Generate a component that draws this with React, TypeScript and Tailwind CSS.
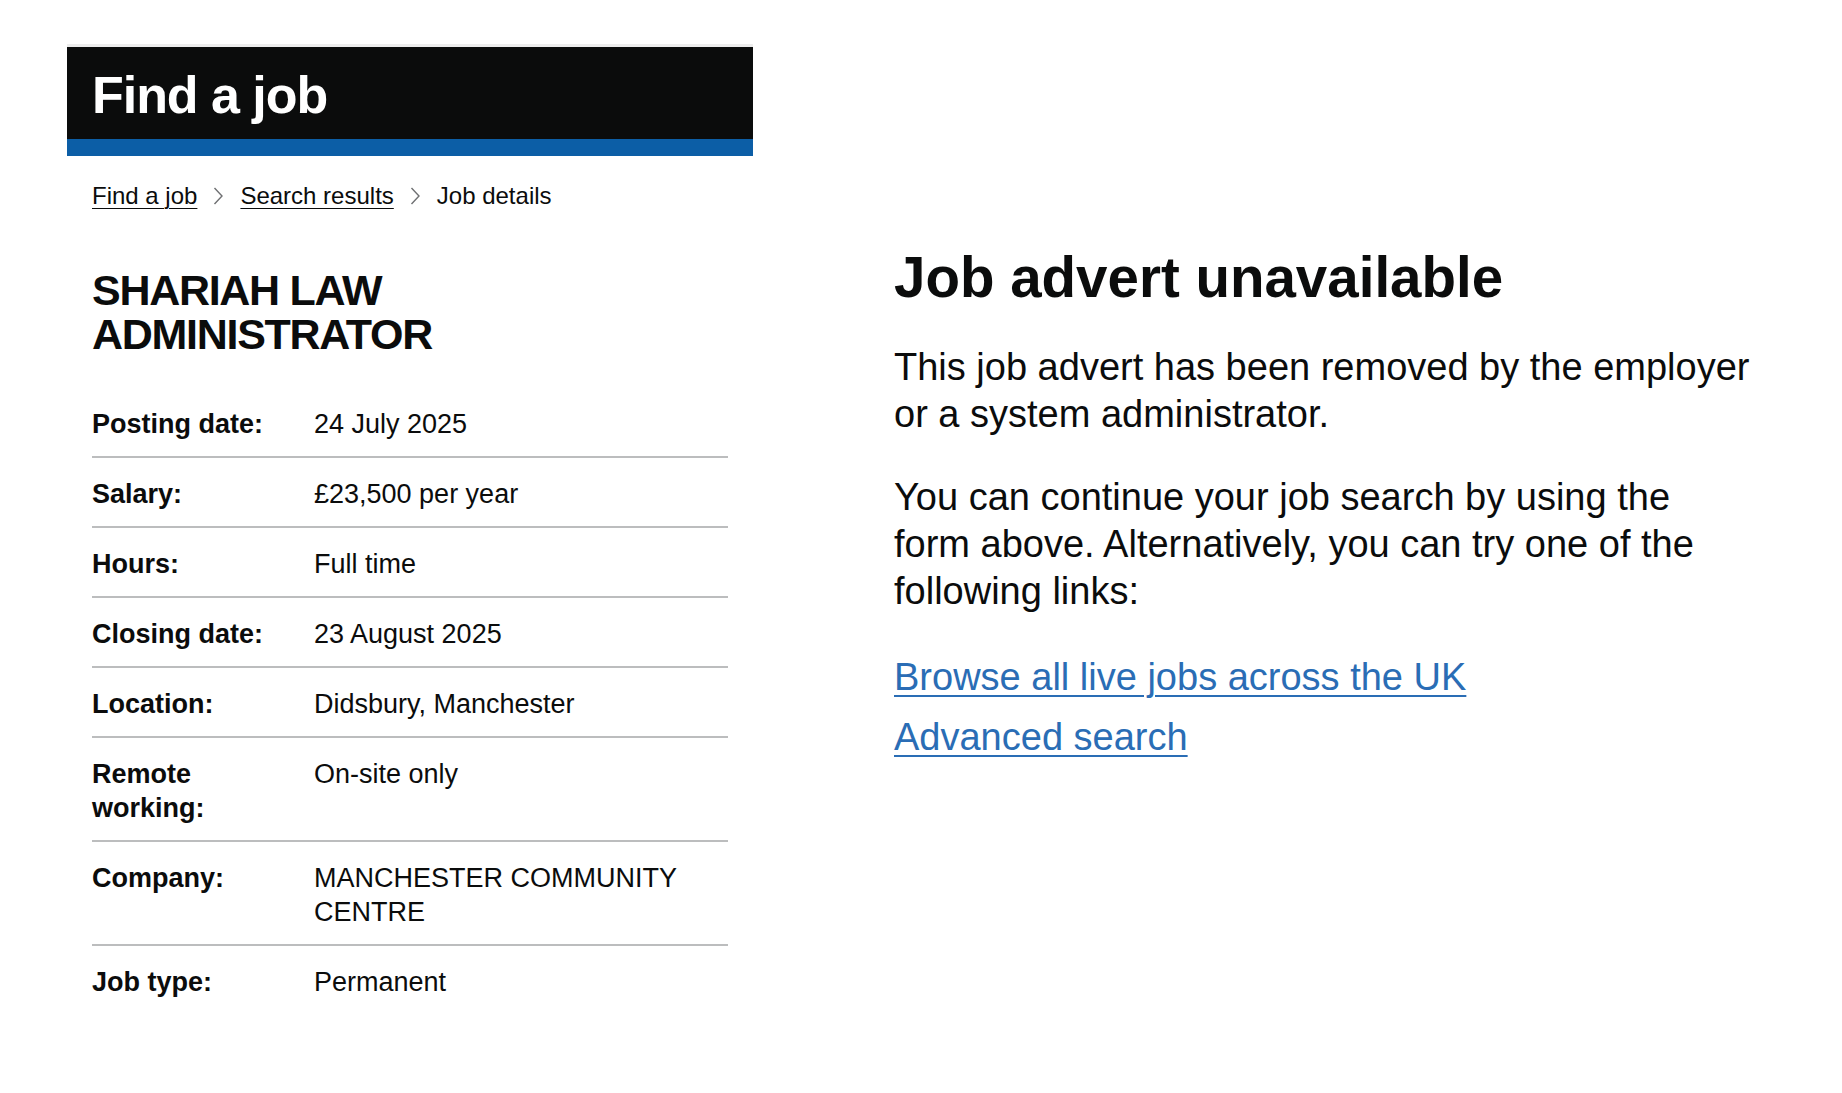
import React from "react";

const rows: { label: React.ReactNode; value: React.ReactNode }[] = [
  { label: "Posting date:", value: "24 July 2025" },
  { label: "Salary:", value: "£23,500 per year" },
  { label: "Hours:", value: "Full time" },
  { label: "Closing date:", value: "23 August 2025" },
  { label: "Location:", value: "Didsbury, Manchester" },
  { label: "Remote working:", value: "On-site only" },
  { label: "Company:", value: "MANCHESTER COMMUNITY CENTRE" },
  { label: "Job type:", value: "Permanent" },
];

function Chevron() {
  return (
    <svg width="11" height="20" viewBox="0 0 11 20" className="mx-[16px] shrink-0" aria-hidden="true">
      <path d="M1.5 2 L9 10 L1.5 18" fill="none" stroke="#6f7072" strokeWidth="1.4" />
    </svg>
  );
}

export default function App() {
  return (
    <div
      className="min-h-[1093px] w-full bg-white text-[#0b0c0c]"
      style={{ fontFamily: '"Liberation Sans", Arial, Helvetica, sans-serif' }}
    >
      <div className="flex pl-[67px] pt-[44px]">
        {/* Left column */}
        <div className="w-[686px] shrink-0">
          <div className="h-[3px] bg-[#ededed]" />
          <div className="flex h-[92px] items-center bg-[#0b0c0c] pl-[25px] pt-[4px]">
            <h1 className="text-[52px] font-bold leading-none tracking-[-0.02em] text-white">Find a job</h1>
          </div>
          <div className="h-[17px] bg-[#0c5ea6]" />

          <div className="pl-[25px]">
            <nav className="mt-[25px] flex items-center text-[24px] leading-[30px]">
              <a href="#" className="underline decoration-1 underline-offset-[4px]">Find a job</a>
              <Chevron />
              <a href="#" className="underline decoration-1 underline-offset-[4px]">Search results</a>
              <Chevron />
              <span>Job details</span>
            </nav>

            <h2 className="mt-[57px] text-[43px] font-bold leading-[44px] tracking-[-0.03em]">
              SHARIAH LAW
              <br />
              ADMINISTRATOR
            </h2>

            <dl className="mt-[32px] w-[636px]">
              {rows.map((r, i) => (
                <div
                  key={i}
                  className={
                    "flex pt-[19px] pb-[15px] text-[27px] leading-[34px] " +
                    (i < rows.length - 1 ? "border-b-2 border-[#bcbdbe]" : "")
                  }
                >
                  <dt className="w-[222px] shrink-0 pr-4 font-bold">{r.label}</dt>
                  <dd className="flex-1">{r.value}</dd>
                </div>
              ))}
            </dl>
          </div>
        </div>

        {/* Right column */}
        <div className="ml-[141px] mt-[202px] w-[900px]">
          <h2 className="text-[56.5px] font-bold leading-[64px]">Job advert unavailable</h2>
          <p className="mt-[34px] text-[38px] leading-[47px]">
            This job advert has been removed by the employer
            <br />
            or a system administrator.
          </p>
          <p className="mt-[36px] text-[38px] leading-[47px]">
            You can continue your job search by using the
            <br />
            form above. Alternatively, you can try one of the
            <br />
            following links:
          </p>
          <div className="mt-[39px] flex flex-col gap-[13px] text-[38px] leading-[47px]">
            <a href="#" className="self-start text-[#2a6db5] underline decoration-2 underline-offset-[5px]">
              Browse all live jobs across the UK
            </a>
            <a href="#" className="self-start text-[#2a6db5] underline decoration-2 underline-offset-[5px]">
              Advanced search
            </a>
          </div>
        </div>
      </div>
    </div>
  );
}
